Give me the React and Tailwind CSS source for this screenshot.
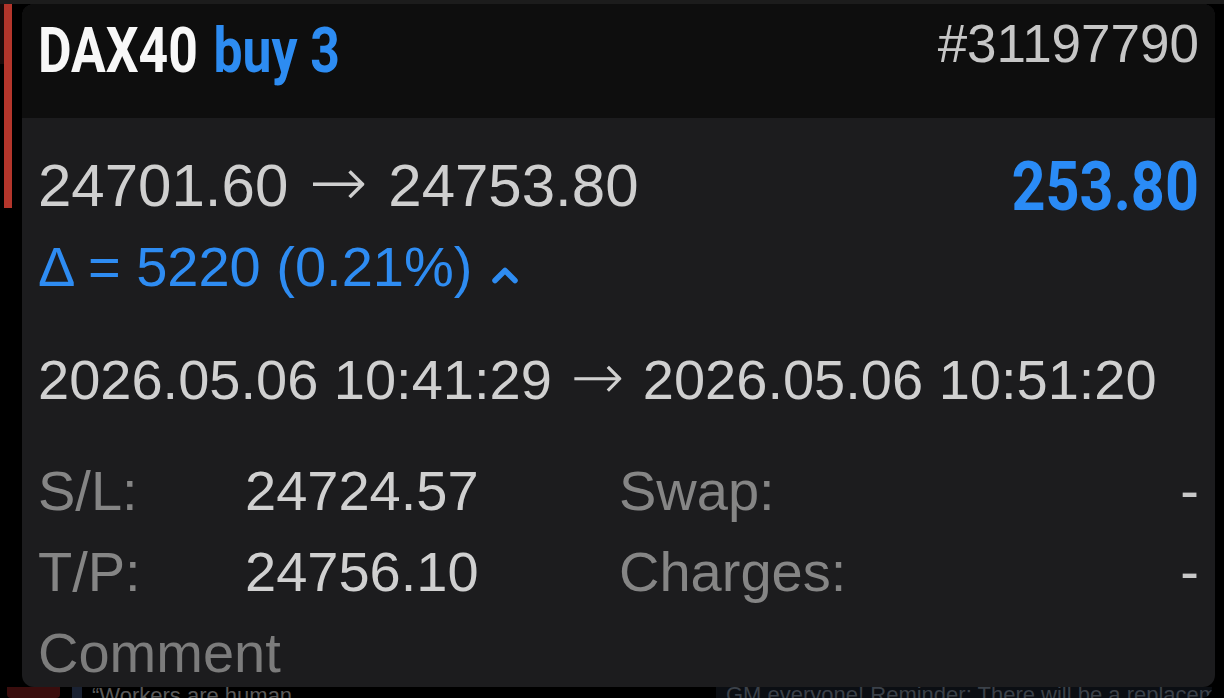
import React from "react";

function Caret() {
  return (
    <svg width="28" height="18" viewBox="0 0 28 18" className="ml-[19px] mt-[16px] shrink-0">
      <polyline points="4,14.5 14,4.5 24,14.5" fill="none" stroke="#2e8cf2" strokeWidth="5.5" strokeLinecap="round" strokeLinejoin="round" />
    </svg>
  );
}

export default function App() {
  return (
    <div className="w-[1224px] h-[698px] bg-black overflow-hidden flex flex-col">
      <div className="h-[4px] w-full bg-[#1c1c1c] shrink-0" />
      <div className="flex shrink-0">
        <div className="w-[4px] h-[60px] bg-[#1a0a0a]" />
        <div className="w-[8px] h-[204px] bg-[#b3352b]" />
        <div className="w-[10px]" />
        <div className="w-[1193px] h-[683px] rounded-[12px] overflow-hidden bg-[#1c1c1e] flex flex-col">
          {/* header */}
          <div className="h-[114px] bg-[#0e0e0e] flex justify-between items-start px-[16px] shrink-0">
            <div className="mt-[15px] inline-block origin-left scale-x-[0.82] font-['Roboto',sans-serif] font-bold text-[63px] leading-[63px] whitespace-nowrap">
              <span className="text-[#f7f7f7]">DAX40</span>
              <span className="ml-[19px] text-[#2d8cf2]">buy 3</span>
            </div>
            <div className="mt-[14px] font-['Liberation_Sans',Arial,sans-serif] text-[53px] leading-[52px] text-[#c6c6c6] whitespace-nowrap">
              #31197790
            </div>
          </div>
          {/* body */}
          <div className="flex flex-col px-[16px] pt-[29px] font-['Liberation_Sans',Arial,sans-serif]">
            <div className="flex justify-between items-start h-[80px]">
              <div className="text-[60px] leading-[70px] text-[#cfcfcf] whitespace-nowrap">
                24701.60
                <span className="inline-block w-[100px] text-center font-['DejaVu_Sans',sans-serif] text-[70px] leading-[70px] font-light">→</span>
                24753.80
              </div>
              <div className="inline-block origin-right scale-x-[0.86] font-['Roboto',sans-serif] font-bold text-[69px] leading-[80px] text-[#2a8bf6] whitespace-nowrap">
                253.80
              </div>
            </div>
            <div className="mt-[5px] flex items-center h-[70px]">
              <div className="text-[56px] leading-[70px] text-[#2e8cf2] whitespace-nowrap">
                Δ = 5220 (0.21%)
              </div>
              <Caret />
            </div>
            <div className="mt-[40px] h-[70px] text-[56px] leading-[70px] text-[#d0d0d0] whitespace-nowrap">
              2026.05.06 10:41:29
              <span className="inline-block w-[91px] text-center font-['DejaVu_Sans',sans-serif] text-[64px] leading-[70px] font-light">→</span>
              2026.05.06 10:51:20
            </div>
            <div className="mt-[38px] grid grid-cols-[207px_374px_1fr] text-[56px] leading-[81px] whitespace-nowrap">
              <div className="text-[#858585]">S/L:</div>
              <div className="text-[#d0d0d0]">24724.57</div>
              <div className="flex justify-between">
                <span className="text-[#858585]">Swap:</span>
                <span className="text-[#c8c8c8]">-</span>
              </div>
              <div className="text-[#858585]">T/P:</div>
              <div className="text-[#d0d0d0]">24756.10</div>
              <div className="flex justify-between">
                <span className="text-[#858585]">Charges:</span>
                <span className="text-[#c8c8c8]">-</span>
              </div>
            </div>
            <div className="text-[56px] leading-[81px] text-[#7c7c7c] whitespace-nowrap">Comment</div>
          </div>
        </div>
      </div>
      {/* faint content behind, below the card */}
      <div className="flex items-start h-[11px] overflow-hidden font-['Liberation_Sans',Arial,sans-serif]">
        <div className="ml-[7px] w-[53px] h-[11px] bg-[#3a0d0d] rounded-b-[4px]" />
        <div className="ml-[12px] w-[10px] h-[11px] bg-[#1a2233]" />
        <div className="ml-[10px] text-[22px] leading-[22px] -mt-[2px] text-[#5a5a5a] whitespace-nowrap">“Workers are human</div>
        <div className="ml-auto mr-[12px] w-[496px] h-[11px] bg-[#0b0e13] rounded-br-[10px] overflow-hidden pl-[10px]">
          <div className="text-[22px] leading-[22px] -mt-[3px] text-[#3b4149] whitespace-nowrap">GM everyone! Reminder: There will be a replacement AUDUSD live trading</div>
        </div>
      </div>
    </div>
  );
}
